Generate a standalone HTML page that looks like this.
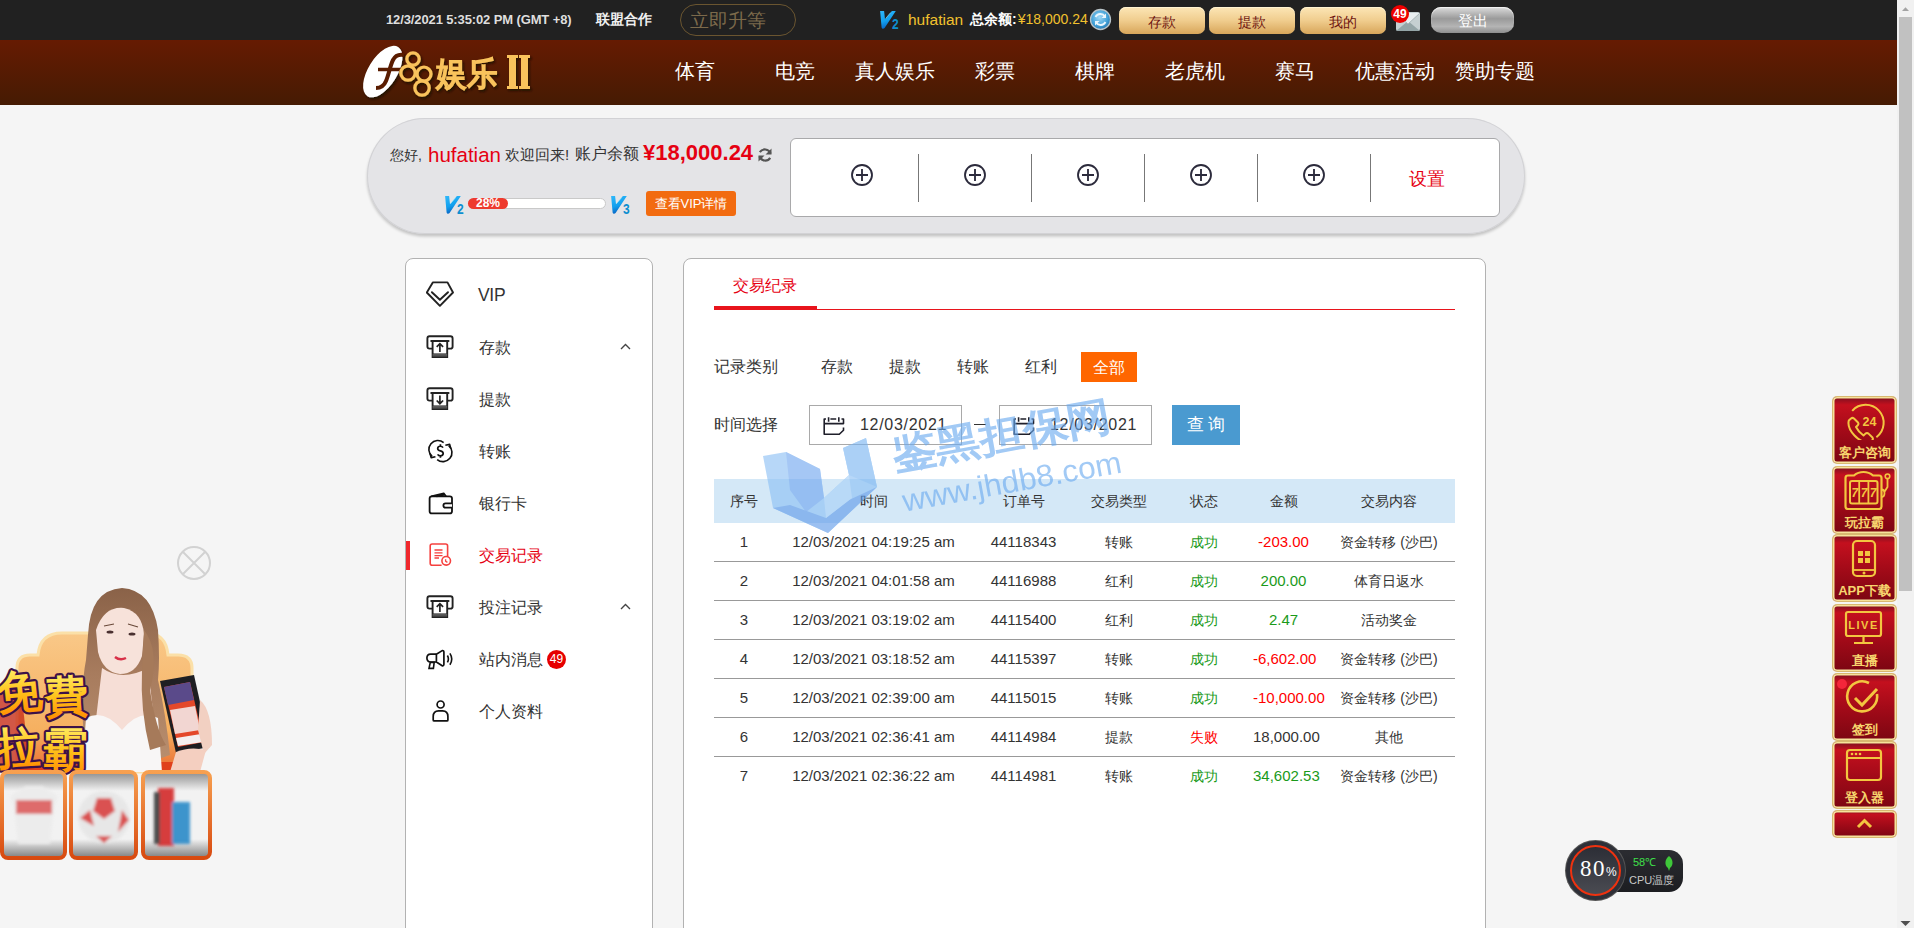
<!DOCTYPE html>
<html><head><meta charset="utf-8">
<style>
*{margin:0;padding:0;box-sizing:border-box}
html,body{width:1914px;height:928px;overflow:hidden}
body{background:#f5f5f5;font-family:"Liberation Sans",sans-serif;color:#333;position:relative}
.a{position:absolute;white-space:nowrap}
#top{position:absolute;left:0;top:0;width:1897px;height:40px;background:#212121}
#nav{position:absolute;left:0;top:40px;width:1897px;height:65px;background:linear-gradient(#661b02,#451b03)}
.nv{position:absolute;top:18px;width:100px;text-align:center;color:#fff;font-size:20px;line-height:26px}
.gbtn{position:absolute;top:7px;width:86px;height:27px;border-radius:7px;background:linear-gradient(#fce6b6,#f0cd8e 50%,#d8a65a);color:#6e1410;font-size:14px;line-height:30px;text-align:center;box-shadow:inset 0 1px 0 #fff3d0}
#sb{position:absolute;left:1897px;top:0;width:17px;height:928px;background:#f1f1f1}
#thumb{position:absolute;left:2px;top:17px;width:13px;height:574px;background:#c1c1c1}
</style></head><body>
<div id="top">
  <div class="a" style="left:386px;top:11px;font-size:13px;font-weight:bold;color:#dedede;line-height:17px;letter-spacing:-0.12px">12/3/2021 5:35:02 PM (GMT +8)</div>
  <div class="a" style="left:596px;top:11px;font-size:14px;font-weight:bold;color:#f0f0f0;line-height:17px">联盟合作</div>
  <div class="a" style="left:680px;top:4px;width:116px;height:32px;border:1px solid #6a5530;border-radius:16px;color:#7c6a4b;font-size:19px;line-height:31px;padding-left:9px">立即升等</div>
  <svg class="a" style="left:879px;top:10px" width="22" height="20" viewBox="0 0 22 20"><defs><linearGradient id="vg" x1="0" y1="0" x2=".3" y2="1"><stop offset="0" stop-color="#30b8fa"/><stop offset=".6" stop-color="#12a0ee"/><stop offset="1" stop-color="#0864c4"/></linearGradient></defs><path d="M1.1 1H5.1L6 9.2L12.9 1H16.8L5.6 18Q5 18.8 4 18.8Q2.9 18.8 2.6 17.6Z" fill="url(#vg)"/><path d="M6.6 8.6L11.6 2.6" stroke="#9ff0ff" stroke-width=".8" opacity=".7"/><text x="0" y="0" font-size="15" font-weight="bold" fill="#0e8fd0" font-family="Liberation Sans" transform="translate(13 18.9) scale(.8 1)">2</text></svg>
  <div class="a" style="left:908px;top:10px;font-size:15.5px;color:#f2c12e;line-height:19px">hufatian</div>
  <div class="a" style="left:970px;top:10px;font-size:14px;font-weight:bold;color:#fff;line-height:19px">总余额:<span style="color:#f2c12e;font-weight:normal;font-size:14px;margin-left:1px">¥18,000.24</span></div>
  <svg class="a" style="left:1089px;top:8px" width="23" height="23" viewBox="0 0 23 23"><defs><radialGradient id="rg" cx=".45" cy=".4" r=".6"><stop offset="0" stop-color="#9fd8f6"/><stop offset=".7" stop-color="#3f9fd6"/><stop offset="1" stop-color="#2a78b0"/></radialGradient></defs><circle cx="11.5" cy="11.5" r="10" fill="url(#rg)" stroke="#b9c4c9" stroke-width="1.3"/><path d="M16 8.5A5.5 5.5 0 0 0 6.5 9M7 14.5A5.5 5.5 0 0 0 16.5 14" fill="none" stroke="#eaf6fd" stroke-width="1.8"/><path d="M17 5.5v4.5h-4.5zM6 17.5v-4.5h4.5z" fill="#eaf6fd"/></svg>
  <div class="gbtn" style="left:1119px">存款</div>
  <div class="gbtn" style="left:1209px">提款</div>
  <div class="gbtn" style="left:1300px">我的</div>
  <svg class="a" style="left:1396px;top:12px" width="24" height="19" viewBox="0 0 24 19"><rect x="0" y="0" width="24" height="19" rx="2" fill="#c5d0d2"/><path d="M0 19L12 9 24 19z" fill="#94a5a7"/><path d="M0 1L12 12 24 1" fill="#e9eff1" stroke="#aab6b8" stroke-width="1"/></svg>
  <div class="a" style="left:1391px;top:5px;width:18px;height:18px;border-radius:50%;background:#e00;color:#fff;font-size:12px;font-weight:bold;line-height:18px;text-align:center">49</div>
  <div class="a" style="left:1431px;top:7px;width:83px;height:26px;border-radius:10px;background:linear-gradient(#dcdcdc,#9a9a9a 45%,#b4b4b4 75%,#8e8e8e);box-shadow:inset 0 1px 1px #f2f2f2;color:#fff;font-size:15px;line-height:28px;text-align:center">登出</div>
</div>
<div id="nav">
  
<svg class="a" style="left:355px;top:0px" width="190" height="65" viewBox="0 0 190 65">
 <defs><filter id="ds" x="-20%" y="-20%" width="140%" height="140%"><feDropShadow dx="1.5" dy="2" stdDeviation="1" flood-color="#1a0800" flood-opacity="0.8"/></filter></defs>
 <g filter="url(#ds)">
 <ellipse cx="28" cy="32" rx="29" ry="14.5" transform="rotate(-58 27.5 32)" fill="#fff"/>
 <path d="M49 15 C44 14 40 16 38 20 C35 26 34 34 31 41 C29 46 26 48 21 48" stroke="#5a1c04" stroke-width="4" fill="none"/>
 <path d="M23 29.5 L48 29.5" stroke="#5a1c04" stroke-width="3.5"/>
 <circle cx="58" cy="19" r="6.2" fill="none" stroke="#f9c35c" stroke-width="3.2"/>
 <circle cx="53" cy="33" r="7.2" fill="none" stroke="#f9c35c" stroke-width="3.2"/>
 <circle cx="69" cy="34" r="7" fill="none" stroke="#f9c35c" stroke-width="3.2"/>
 <circle cx="67" cy="48" r="7.2" fill="none" stroke="#f9c35c" stroke-width="3.2"/>
 <text x="0" y="0" font-size="31" fill="#f9c35c" stroke="#f9c35c" stroke-width="1.6" font-family="Liberation Sans,sans-serif" transform="translate(81,45) scale(1,1.08)">娱乐</text>
 <path d="M152 15h11v3h-2v28h2v3h-11v-3h2v-28h-2z M164 15h11v3h-2v28h2v3h-11v-3h2v-28h-2z" fill="#f9c35c"/>
 </g>
</svg>
  <div class="nv" style="left:645px">体育</div>
  <div class="nv" style="left:745px">电竞</div>
  <div class="nv" style="left:845px">真人娱乐</div>
  <div class="nv" style="left:945px">彩票</div>
  <div class="nv" style="left:1045px">棋牌</div>
  <div class="nv" style="left:1145px">老虎机</div>
  <div class="nv" style="left:1245px">赛马</div>
  <div class="nv" style="left:1345px">优惠活动</div>
  <div class="nv" style="left:1445px">赞助专题</div>
</div>

<div class="a" style="left:367px;top:118px;width:1158px;height:116px;border-radius:58px;background:#e4e4e7;box-shadow:0 2.5px 3px rgba(0,0,0,.2), inset 0 0 0 1px #d2d2d5"></div>
<div class="a" style="left:390px;top:145px;font-size:14px;line-height:20px;color:#333">您好,</div>
<div class="a" style="left:428px;top:143px;font-size:20.5px;line-height:24px;color:#e60012">hufatian</div>
<div class="a" style="left:505px;top:145px;font-size:15px;line-height:20px;color:#333">欢迎回来!</div><div class="a" style="left:575px;top:144px;font-size:16px;line-height:20px;color:#333">账户余额</div>
<div class="a" style="left:643px;top:141px;font-size:22px;line-height:24px;color:#e60012;font-weight:bold">¥18,000.24</div>
<svg class="a" style="left:757px;top:147px" width="16" height="16" viewBox="0 0 16 16"><path d="M13.5 6.5A6 6 0 0 0 2.8 5.2M2.5 9.5a6 6 0 0 0 10.7 1.3" fill="none" stroke="#555" stroke-width="2.2"/><path d="M14.5 1.5v6h-6z M1.5 14.5v-6h6z" fill="#555"/></svg>
<svg class="a" style="left:444px;top:195px" width="22" height="20" viewBox="0 0 22 20"><defs><linearGradient id="vg2" x1="0" y1="0" x2=".3" y2="1"><stop offset="0" stop-color="#30b8fa"/><stop offset=".6" stop-color="#12a0ee"/><stop offset="1" stop-color="#0864c4"/></linearGradient></defs><path d="M1.1 1H5.1L6 9.2L12.9 1H16.8L5.6 18Q5 18.8 4 18.8Q2.9 18.8 2.6 17.6Z" fill="url(#vg2)"/><path d="M6.6 8.6L11.6 2.6" stroke="#9ff0ff" stroke-width=".8" opacity=".7"/><text x="0" y="0" font-size="15" font-weight="bold" fill="#0e8fd0" font-family="Liberation Sans" transform="translate(13 18.9) scale(.8 1)">2</text></svg>
<div class="a" style="left:468px;top:198px;width:138px;height:11px;border-radius:6px;background:#fff;border:1px solid #c9c9c9"></div>
<div class="a" style="left:468px;top:198px;width:40px;height:11px;border-radius:6px;background:#ee3a2e;color:#fff;font-size:12px;font-weight:bold;line-height:11px;text-align:center">28%</div>
<svg class="a" style="left:610px;top:195px" width="22" height="20" viewBox="0 0 22 20"><defs><linearGradient id="vg3" x1="0" y1="0" x2=".3" y2="1"><stop offset="0" stop-color="#30b8fa"/><stop offset=".6" stop-color="#12a0ee"/><stop offset="1" stop-color="#0864c4"/></linearGradient></defs><path d="M1.1 1H5.1L6 9.2L12.9 1H16.8L5.6 18Q5 18.8 4 18.8Q2.9 18.8 2.6 17.6Z" fill="url(#vg3)"/><path d="M6.6 8.6L11.6 2.6" stroke="#9ff0ff" stroke-width=".8" opacity=".7"/><text x="0" y="0" font-size="15" font-weight="bold" fill="#0e8fd0" font-family="Liberation Sans" transform="translate(13 18.9) scale(.8 1)">3</text></svg>
<div class="a" style="left:646px;top:191px;width:90px;height:25px;border-radius:3px;background:#f26b10;color:#fff;font-size:13px;line-height:25px;text-align:center">查看VIP详情</div>
<div class="a" style="left:790px;top:138px;width:710px;height:79px;border-radius:6px;background:#fff;border:1px solid #a9a9ab"></div>
<svg class="a" style="left:850px;top:163px" width="24" height="24" viewBox="0 0 24 24"><circle cx="12" cy="12" r="10" fill="none" stroke="#2c2b3c" stroke-width="1.85"/><path d="M12 6v12M6 12h12" stroke="#2c2b3c" stroke-width="1.85"/></svg>
<svg class="a" style="left:963px;top:163px" width="24" height="24" viewBox="0 0 24 24"><circle cx="12" cy="12" r="10" fill="none" stroke="#2c2b3c" stroke-width="1.85"/><path d="M12 6v12M6 12h12" stroke="#2c2b3c" stroke-width="1.85"/></svg>
<svg class="a" style="left:1076px;top:163px" width="24" height="24" viewBox="0 0 24 24"><circle cx="12" cy="12" r="10" fill="none" stroke="#2c2b3c" stroke-width="1.85"/><path d="M12 6v12M6 12h12" stroke="#2c2b3c" stroke-width="1.85"/></svg>
<svg class="a" style="left:1189px;top:163px" width="24" height="24" viewBox="0 0 24 24"><circle cx="12" cy="12" r="10" fill="none" stroke="#2c2b3c" stroke-width="1.85"/><path d="M12 6v12M6 12h12" stroke="#2c2b3c" stroke-width="1.85"/></svg>
<svg class="a" style="left:1302px;top:163px" width="24" height="24" viewBox="0 0 24 24"><circle cx="12" cy="12" r="10" fill="none" stroke="#2c2b3c" stroke-width="1.85"/><path d="M12 6v12M6 12h12" stroke="#2c2b3c" stroke-width="1.85"/></svg>
<div class="a" style="left:918px;top:154px;width:1px;height:48px;background:#777"></div>
<div class="a" style="left:1031px;top:154px;width:1px;height:48px;background:#777"></div>
<div class="a" style="left:1144px;top:154px;width:1px;height:48px;background:#777"></div>
<div class="a" style="left:1257px;top:154px;width:1px;height:48px;background:#777"></div>
<div class="a" style="left:1370px;top:154px;width:1px;height:48px;background:#777"></div>
<div class="a" style="left:1409px;top:168px;font-size:18px;line-height:22px;color:#e60012">设置</div>

<div class="a" style="left:405px;top:258px;width:248px;height:700px;border-radius:8px;background:#fff;border:1px solid #b2b2b2"></div>
<div class="a" style="left:683px;top:258px;width:803px;height:700px;border-radius:8px;background:#fff;border:1px solid #b2b2b2"></div>
<svg class="a" style="left:426px;top:281px" width="28" height="26" viewBox="0 0 28 26"><path d="M6.8 1.4H21.5L27 11.5L13.9 24.8L0.8 11.5Z" fill="none" stroke="#222" stroke-width="1.9" stroke-linejoin="round"/><path d="M5.9 11.2L13.9 18.8L22 11.2" fill="none" stroke="#222" stroke-width="1.9" stroke-linecap="round" stroke-linejoin="round"/></svg>
<div class="a" style="left:478px;top:284px;font-size:17.5px;line-height:22px;color:#333;letter-spacing:-0.3px">VIP</div>
<svg class="a" style="left:426px;top:334px" width="28" height="26" viewBox="0 0 28 26"><path d="M6.4 14.6H3.6Q1.4 14.6 1.4 12.4V4.4Q1.4 2.2 3.6 2.2H24.4Q26.6 2.2 26.6 4.4V12.4Q26.6 14.6 24.4 14.6H21.4" fill="none" stroke="#222" stroke-width="1.9"/><path d="M5.2 7H22.6" stroke="#222" stroke-width="1.9" stroke-linecap="round"/><path d="M6.6 7V23H21.2V7" fill="none" stroke="#222" stroke-width="1.9"/><rect x="6.6" y="19.4" width="14.6" height="3.6" fill="#333"/><path d="M6.6 20.6H21.2M6.6 21.8H21.2" stroke="#888" stroke-width=".5"/><path d="M13.9 17.9V9.6M10.7 12.8L13.9 9.6L17.1 12.8" fill="none" stroke="#222" stroke-width="1.7"/></svg>
<div class="a" style="left:479px;top:337px;font-size:16px;line-height:22px;color:#333">存款</div>
<svg class="a" style="left:620px;top:343px" width="11" height="7" viewBox="0 0 11 7"><path d="M1 6l4.5-4.5L10 6" fill="none" stroke="#444" stroke-width="1.4"/></svg>
<svg class="a" style="left:426px;top:386px" width="28" height="26" viewBox="0 0 28 26"><path d="M6.4 14.6H3.6Q1.4 14.6 1.4 12.4V4.4Q1.4 2.2 3.6 2.2H24.4Q26.6 2.2 26.6 4.4V12.4Q26.6 14.6 24.4 14.6H21.4" fill="none" stroke="#222" stroke-width="1.9"/><path d="M5.2 7H22.6" stroke="#222" stroke-width="1.9" stroke-linecap="round"/><path d="M6.6 7V23H21.2V7" fill="none" stroke="#222" stroke-width="1.9"/><rect x="6.6" y="19.4" width="14.6" height="3.6" fill="#333"/><path d="M6.6 20.6H21.2M6.6 21.8H21.2" stroke="#888" stroke-width=".5"/><path d="M13.9 9.4V17.7M10.7 14.5L13.9 17.7L17.1 14.5" fill="none" stroke="#222" stroke-width="1.7"/></svg>
<div class="a" style="left:479px;top:389px;font-size:16px;line-height:22px;color:#333">提款</div>
<svg class="a" style="left:426px;top:438px" width="28" height="26" viewBox="0 0 28 26"><g transform="translate(1.44 1.3) scale(0.9)"><path d="M18 3.6A10 10 0 0 0 5.2 19M10.8 22.5A10 10 0 0 0 23.6 7" fill="none" stroke="#111" stroke-width="1.8"/><path d="M2.8 15.6L4.1 20.4L8.9 19.3M26 10.4L24.7 5.6L19.9 6.7" fill="none" stroke="#111" stroke-width="1.8" stroke-linejoin="round"/><path d="M17.3 9.3Q16.4 7.7 14.4 7.7Q11.4 7.7 11.4 10.2Q11.4 12.3 14.4 12.9Q17.5 13.5 17.5 15.8Q17.5 18.3 14.4 18.3Q12.3 18.3 11.3 16.7M14.4 5.6V7.7M14.4 18.3V20.4" fill="none" stroke="#111" stroke-width="1.9"/></g></svg>
<div class="a" style="left:479px;top:441px;font-size:16px;line-height:22px;color:#333">转账</div>
<svg class="a" style="left:426px;top:490px" width="28" height="26" viewBox="0 0 28 26"><rect x="3.6" y="6.4" width="22.4" height="17" rx="2.2" fill="none" stroke="#111" stroke-width="1.8"/><path d="M26 13.3H19.6Q17.4 13.3 17.4 15.5Q17.4 17.7 19.6 17.7H26" fill="#fff" stroke="#111" stroke-width="1.8"/><path d="M5.2 6.4L17.8 3.2L20.2 6.4M10.5 6.4L19.2 4.6" fill="none" stroke="#111" stroke-width="1.6" stroke-linejoin="round"/></svg>
<div class="a" style="left:479px;top:493px;font-size:16px;line-height:22px;color:#333">银行卡</div>
<svg class="a" style="left:426px;top:542px" width="28" height="26" viewBox="0 0 28 26"><path d="M21.6 14V4Q21.6 2 19.6 2H6.2Q4.2 2 4.2 4V21.2Q4.2 23.2 6.2 23.2H15.6" fill="none" stroke="#f5413f" stroke-width="1.6"/><path d="M8.5 8H16.5M8.5 10.8H16.5M8.5 13.6H16.5M8.5 16H13" stroke="#f5413f" stroke-width="1.3"/><circle cx="20.2" cy="18.8" r="4.3" fill="#fff" stroke="#f5413f" stroke-width="1.6"/><path d="M19.6 17.2V19.2L21.4 20.4" fill="none" stroke="#f5413f" stroke-width="1.3"/></svg>
<div class="a" style="left:479px;top:545px;font-size:16px;line-height:22px;color:#e60012">交易记录</div>
<svg class="a" style="left:426px;top:594px" width="28" height="26" viewBox="0 0 28 26"><path d="M6.4 14.6H3.6Q1.4 14.6 1.4 12.4V4.4Q1.4 2.2 3.6 2.2H24.4Q26.6 2.2 26.6 4.4V12.4Q26.6 14.6 24.4 14.6H21.4" fill="none" stroke="#222" stroke-width="1.9"/><path d="M5.2 7H22.6" stroke="#222" stroke-width="1.9" stroke-linecap="round"/><path d="M6.6 7V23H21.2V7" fill="none" stroke="#222" stroke-width="1.9"/><rect x="6.6" y="19.4" width="14.6" height="3.6" fill="#333"/><path d="M6.6 20.6H21.2M6.6 21.8H21.2" stroke="#888" stroke-width=".5"/><path d="M13.9 17.9V9.6M10.7 12.8L13.9 9.6L17.1 12.8" fill="none" stroke="#222" stroke-width="1.7"/></svg>
<div class="a" style="left:479px;top:597px;font-size:16px;line-height:22px;color:#333">投注记录</div>
<svg class="a" style="left:620px;top:603px" width="11" height="7" viewBox="0 0 11 7"><path d="M1 6l4.5-4.5L10 6" fill="none" stroke="#444" stroke-width="1.4"/></svg>
<svg class="a" style="left:426px;top:646px" width="28" height="26" viewBox="0 0 28 26"><path d="M10.4 8.2H4.6Q1 8.2 0.9 12.1Q1 16 4.6 16H10.4" fill="none" stroke="#111" stroke-width="1.7"/><path d="M10.4 8.2L16.2 4.6Q17.9 4.4 17.9 6.2V18.2Q17.9 20 16.2 19.8L10.4 16Z" fill="none" stroke="#111" stroke-width="1.7" stroke-linejoin="round"/><path d="M4.3 16.4L8.2 16.4L7.4 22.4L3 22.4Z" fill="none" stroke="#111" stroke-width="1.6"/><path d="M21.4 9.5Q23.4 13 21.4 16.4M23.9 7.4Q27.6 13 23.9 18.8" fill="none" stroke="#111" stroke-width="1.6"/></svg>
<div class="a" style="left:479px;top:649px;font-size:16px;line-height:22px;color:#333">站内消息</div>
<svg class="a" style="left:426px;top:698px" width="28" height="26" viewBox="0 0 28 26"><circle cx="14.6" cy="6.5" r="3.5" fill="none" stroke="#111" stroke-width="1.7"/><path d="M8.2 22.9Q7.2 22.9 7.2 21.9V18.6Q7.2 12.9 12.6 12.9H16.6Q21.9 12.9 21.9 18.6V21.9Q21.9 22.9 20.9 22.9Z" fill="none" stroke="#111" stroke-width="1.7" stroke-linejoin="round"/></svg>
<div class="a" style="left:479px;top:701px;font-size:16px;line-height:22px;color:#333">个人资料</div>
<div class="a" style="left:406px;top:541px;width:4px;height:29px;background:#f0282d"></div>
<div class="a" style="left:547px;top:650px;width:19px;height:19px;border-radius:50%;background:#e60000;color:#fff;font-size:12px;line-height:19px;text-align:center">49</div>

<div class="a" style="left:733px;top:275px;font-size:16px;line-height:22px;color:#e60012">交易纪录</div>
<div class="a" style="left:714px;top:309px;width:741px;height:1px;background:#e8141c"></div>
<div class="a" style="left:714px;top:306px;width:103px;height:4px;background:#e8141c"></div>
<div class="a" style="left:714px;top:356px;font-size:16px;line-height:22px;color:#333">记录类别</div>
<div class="a" style="left:809px;top:352px;width:56px;height:30px;font-size:16px;line-height:30px;text-align:center;color:#333">存款</div>
<div class="a" style="left:877px;top:352px;width:56px;height:30px;font-size:16px;line-height:30px;text-align:center;color:#333">提款</div>
<div class="a" style="left:945px;top:352px;width:56px;height:30px;font-size:16px;line-height:30px;text-align:center;color:#333">转账</div>
<div class="a" style="left:1013px;top:352px;width:56px;height:30px;font-size:16px;line-height:30px;text-align:center;color:#333">红利</div>
<div class="a" style="left:1081px;top:352px;width:56px;height:30px;background:#ff6600;font-size:16px;line-height:32px;text-align:center;color:#fff">全部</div>
<div class="a" style="left:714px;top:414px;font-size:16px;line-height:22px;color:#333">时间选择</div>
<div class="a" style="left:809px;top:405px;width:153px;height:40px;border:1px solid #a9a9a9;background:transparent"></div>
<svg class="a" style="left:823px;top:416px" width="23" height="20" viewBox="0 0 23 20"><path d="M3 3H1.2V18.3H16.3L20.5 14.2V11.5M1.2 7.6H20.5V3H18.5M7.4 3H13.2M5.6 1.3V5.7M15.8 1.3V5.7" fill="none" stroke="#1f1f2a" stroke-width="1.6" stroke-linejoin="round"/></svg>
<div class="a" style="left:860px;top:414px;font-size:16px;line-height:22px;color:#333;letter-spacing:0.7px">12/03/2021</div>
<div class="a" style="left:999px;top:405px;width:153px;height:40px;border:1px solid #a9a9a9;background:transparent"></div>
<svg class="a" style="left:1013px;top:416px" width="23" height="20" viewBox="0 0 23 20"><path d="M3 3H1.2V18.3H16.3L20.5 14.2V11.5M1.2 7.6H20.5V3H18.5M7.4 3H13.2M5.6 1.3V5.7M15.8 1.3V5.7" fill="none" stroke="#1f1f2a" stroke-width="1.6" stroke-linejoin="round"/></svg>
<div class="a" style="left:1050px;top:414px;font-size:16px;line-height:22px;color:#333;letter-spacing:0.7px">12/03/2021</div>
<div class="a" style="left:974px;top:424px;width:12px;height:1px;background:#333"></div>
<div class="a" style="left:1172px;top:405px;width:68px;height:40px;background:#4a9ad0;color:#fff;font-size:17px;line-height:40px;text-align:center;letter-spacing:4px;text-indent:4px">查询</div>
<div class="a" style="left:714px;top:479px;width:741px;height:44px;background:#d4e8f7"></div>
<div class="a" style="left:714px;top:490px;width:60px;font-size:14px;line-height:22px;text-align:center;color:#333">序号</div>
<div class="a" style="left:774px;top:490px;width:199px;font-size:14px;line-height:22px;text-align:center;color:#333">时间</div>
<div class="a" style="left:973px;top:490px;width:101px;font-size:14px;line-height:22px;text-align:center;color:#333">订单号</div>
<div class="a" style="left:1074px;top:490px;width:89px;font-size:14px;line-height:22px;text-align:center;color:#333">交易类型</div>
<div class="a" style="left:1163px;top:490px;width:81px;font-size:14px;line-height:22px;text-align:center;color:#333">状态</div>
<div class="a" style="left:1244px;top:490px;width:79px;font-size:14px;line-height:22px;text-align:center;color:#333">金额</div>
<div class="a" style="left:1323px;top:490px;width:132px;font-size:14px;line-height:22px;text-align:center;color:#333">交易内容</div>
<div class="a" style="left:714px;top:561px;width:741px;height:1px;background:#999"></div>
<div class="a" style="left:714px;top:531px;width:60px;font-size:15px;line-height:22px;text-align:center;color:#333">1</div>
<div class="a" style="left:774px;top:531px;width:199px;font-size:15px;line-height:22px;text-align:center;color:#333">12/03/2021 04:19:25 am</div>
<div class="a" style="left:973px;top:531px;width:101px;font-size:15px;line-height:22px;text-align:center;color:#333">44118343</div>
<div class="a" style="left:1074px;top:531px;width:89px;font-size:14px;line-height:22px;text-align:center;color:#333">转账</div>
<div class="a" style="left:1163px;top:531px;width:81px;font-size:14px;line-height:22px;text-align:center;color:#1a9a1a">成功</div>
<div class="a" style="left:1253px;top:531px;width:61px;font-size:15px;line-height:22px;text-align:center;color:#f00">-203.00</div>
<div class="a" style="left:1323px;top:531px;width:132px;font-size:14px;line-height:22px;text-align:center;color:#333">资金转移 (沙巴)</div>
<div class="a" style="left:714px;top:600px;width:741px;height:1px;background:#999"></div>
<div class="a" style="left:714px;top:570px;width:60px;font-size:15px;line-height:22px;text-align:center;color:#333">2</div>
<div class="a" style="left:774px;top:570px;width:199px;font-size:15px;line-height:22px;text-align:center;color:#333">12/03/2021 04:01:58 am</div>
<div class="a" style="left:973px;top:570px;width:101px;font-size:15px;line-height:22px;text-align:center;color:#333">44116988</div>
<div class="a" style="left:1074px;top:570px;width:89px;font-size:14px;line-height:22px;text-align:center;color:#333">红利</div>
<div class="a" style="left:1163px;top:570px;width:81px;font-size:14px;line-height:22px;text-align:center;color:#1a9a1a">成功</div>
<div class="a" style="left:1253px;top:570px;width:61px;font-size:15px;line-height:22px;text-align:center;color:#1a9a1a">200.00</div>
<div class="a" style="left:1323px;top:570px;width:132px;font-size:14px;line-height:22px;text-align:center;color:#333">体育日返水</div>
<div class="a" style="left:714px;top:639px;width:741px;height:1px;background:#999"></div>
<div class="a" style="left:714px;top:609px;width:60px;font-size:15px;line-height:22px;text-align:center;color:#333">3</div>
<div class="a" style="left:774px;top:609px;width:199px;font-size:15px;line-height:22px;text-align:center;color:#333">12/03/2021 03:19:02 am</div>
<div class="a" style="left:973px;top:609px;width:101px;font-size:15px;line-height:22px;text-align:center;color:#333">44115400</div>
<div class="a" style="left:1074px;top:609px;width:89px;font-size:14px;line-height:22px;text-align:center;color:#333">红利</div>
<div class="a" style="left:1163px;top:609px;width:81px;font-size:14px;line-height:22px;text-align:center;color:#1a9a1a">成功</div>
<div class="a" style="left:1253px;top:609px;width:61px;font-size:15px;line-height:22px;text-align:center;color:#1a9a1a">2.47</div>
<div class="a" style="left:1323px;top:609px;width:132px;font-size:14px;line-height:22px;text-align:center;color:#333">活动奖金</div>
<div class="a" style="left:714px;top:678px;width:741px;height:1px;background:#999"></div>
<div class="a" style="left:714px;top:648px;width:60px;font-size:15px;line-height:22px;text-align:center;color:#333">4</div>
<div class="a" style="left:774px;top:648px;width:199px;font-size:15px;line-height:22px;text-align:center;color:#333">12/03/2021 03:18:52 am</div>
<div class="a" style="left:973px;top:648px;width:101px;font-size:15px;line-height:22px;text-align:center;color:#333">44115397</div>
<div class="a" style="left:1074px;top:648px;width:89px;font-size:14px;line-height:22px;text-align:center;color:#333">转账</div>
<div class="a" style="left:1163px;top:648px;width:81px;font-size:14px;line-height:22px;text-align:center;color:#1a9a1a">成功</div>
<div class="a" style="left:1253px;top:648px;width:61px;font-size:15px;line-height:22px;text-align:center;color:#f00">-6,602.00</div>
<div class="a" style="left:1323px;top:648px;width:132px;font-size:14px;line-height:22px;text-align:center;color:#333">资金转移 (沙巴)</div>
<div class="a" style="left:714px;top:717px;width:741px;height:1px;background:#999"></div>
<div class="a" style="left:714px;top:687px;width:60px;font-size:15px;line-height:22px;text-align:center;color:#333">5</div>
<div class="a" style="left:774px;top:687px;width:199px;font-size:15px;line-height:22px;text-align:center;color:#333">12/03/2021 02:39:00 am</div>
<div class="a" style="left:973px;top:687px;width:101px;font-size:15px;line-height:22px;text-align:center;color:#333">44115015</div>
<div class="a" style="left:1074px;top:687px;width:89px;font-size:14px;line-height:22px;text-align:center;color:#333">转账</div>
<div class="a" style="left:1163px;top:687px;width:81px;font-size:14px;line-height:22px;text-align:center;color:#1a9a1a">成功</div>
<div class="a" style="left:1253px;top:687px;width:61px;font-size:15px;line-height:22px;text-align:center;color:#f00">-10,000.00</div>
<div class="a" style="left:1323px;top:687px;width:132px;font-size:14px;line-height:22px;text-align:center;color:#333">资金转移 (沙巴)</div>
<div class="a" style="left:714px;top:756px;width:741px;height:1px;background:#999"></div>
<div class="a" style="left:714px;top:726px;width:60px;font-size:15px;line-height:22px;text-align:center;color:#333">6</div>
<div class="a" style="left:774px;top:726px;width:199px;font-size:15px;line-height:22px;text-align:center;color:#333">12/03/2021 02:36:41 am</div>
<div class="a" style="left:973px;top:726px;width:101px;font-size:15px;line-height:22px;text-align:center;color:#333">44114984</div>
<div class="a" style="left:1074px;top:726px;width:89px;font-size:14px;line-height:22px;text-align:center;color:#333">提款</div>
<div class="a" style="left:1163px;top:726px;width:81px;font-size:14px;line-height:22px;text-align:center;color:#f00">失败</div>
<div class="a" style="left:1253px;top:726px;width:61px;font-size:15px;line-height:22px;text-align:center;color:#333">18,000.00</div>
<div class="a" style="left:1323px;top:726px;width:132px;font-size:14px;line-height:22px;text-align:center;color:#333">其他</div>
<div class="a" style="left:714px;top:765px;width:60px;font-size:15px;line-height:22px;text-align:center;color:#333">7</div>
<div class="a" style="left:774px;top:765px;width:199px;font-size:15px;line-height:22px;text-align:center;color:#333">12/03/2021 02:36:22 am</div>
<div class="a" style="left:973px;top:765px;width:101px;font-size:15px;line-height:22px;text-align:center;color:#333">44114981</div>
<div class="a" style="left:1074px;top:765px;width:89px;font-size:14px;line-height:22px;text-align:center;color:#333">转账</div>
<div class="a" style="left:1163px;top:765px;width:81px;font-size:14px;line-height:22px;text-align:center;color:#1a9a1a">成功</div>
<div class="a" style="left:1253px;top:765px;width:61px;font-size:15px;line-height:22px;text-align:center;color:#1a9a1a">34,602.53</div>
<div class="a" style="left:1323px;top:765px;width:132px;font-size:14px;line-height:22px;text-align:center;color:#333">资金转移 (沙巴)</div>

<svg class="a" style="left:740px;top:380px" width="420" height="180" viewBox="740 380 420 180">
 <g opacity=".62">
  <path d="M763 456 L786 452 L820 469 L824 498 L849 475 L843 448 L866 438 L877 487 L828 533 L773 508z" fill="#8cc0f5"/>
  <path d="M786 452 L820 469 L824 498 L806 512 L790 490z" fill="#6fa5ef"/>
  <path d="M843 448 L866 438 L877 487 L849 475z" fill="#78b4f2"/>
  <path d="M773 508 L828 533 L877 487 L849 500 L826 518 L790 505z" fill="#5f9ae9"/>
  <path d="M824 498 L849 475 L852 498 L826 518z" fill="#a8d0f8"/>
  <g transform="rotate(-10.3 900 470)" fill="#6aaaf0" font-family="Liberation Sans,sans-serif">
   <text x="895" y="468" font-size="41" textLength="222" lengthAdjust="spacingAndGlyphs" stroke="#6aaaf0" stroke-width="1.5">鉴黑担保网</text>
   <text x="897" y="512" font-size="31" textLength="222" lengthAdjust="spacingAndGlyphs">www.jhdb8.com</text>
  </g>
 </g>
</svg>

<svg class="a" style="left:0px;top:540px" width="240" height="330" viewBox="0 0 240 330">
 <defs>
  <linearGradient id="org" x1="0" y1="0" x2="0" y2="1"><stop offset="0" stop-color="#f9c888"/><stop offset=".7" stop-color="#f6b060"/><stop offset="1" stop-color="#e86a30"/></linearGradient>
  <linearGradient id="box" x1="0" y1="0" x2="0" y2="1"><stop offset="0" stop-color="#8c8c8c"/><stop offset=".22" stop-color="#f2f2f2"/><stop offset=".78" stop-color="#f2f2f2"/><stop offset="1" stop-color="#7c7c7c"/></linearGradient>
  <linearGradient id="hair" x1="0" y1="0" x2="0" y2="1"><stop offset="0" stop-color="#8a6248"/><stop offset=".5" stop-color="#a87c5e"/><stop offset="1" stop-color="#b88e6e"/></linearGradient>
  <linearGradient id="txt" x1="0" y1="0" x2="0" y2="1"><stop offset="0" stop-color="#fff06a"/><stop offset=".5" stop-color="#ffc21a"/><stop offset="1" stop-color="#ff8a00"/></linearGradient>
  <linearGradient id="brd" x1="0" y1="0" x2="0" y2="1"><stop offset="0" stop-color="#f7a050"/><stop offset="1" stop-color="#d84a10"/></linearGradient>
 </defs>
 <circle cx="194" cy="23" r="16" fill="none" stroke="#d2d2d2" stroke-width="2"/>
 <path d="M183 12l22 22M205 12l-22 22" stroke="#d2d2d2" stroke-width="2"/>
 <path d="M17 232 L17 128 Q17 115 30 115 L38 115 Q40 93 62 93 L146 93 Q166 93 168 115 L178 115 Q192 115 192 128 L192 232z" fill="url(#org)" stroke="#fbe0a8" stroke-width="3"/>
 <path d="M0 150 L20 140 L30 230 L0 232z" fill="#c8301a" opacity=".8"/>
 <path d="M20 222 L190 222 L192 232 L17 232z" fill="#e0401c"/>
 <path d="M88 95 Q90 50 122 48 Q152 50 158 90 Q160 120 158 140 Q166 175 170 215 L150 222 L146 150 L104 150 L98 200 L84 200 Q80 150 86 120z" fill="url(#hair)"/>
 <path d="M96 90 Q104 66 124 68 Q142 72 144 94 L142 116 Q136 134 120 134 Q103 132 98 112z" fill="#f7e2da"/>
 <path d="M102 128 Q122 142 148 128 L156 196 L94 196z" fill="#f6ded6"/>
 <path d="M86 178 Q104 168 122 190 Q140 168 158 178 L162 232 L82 232z" fill="#f8f6f6"/>
 <path d="M104 86 L114 84 M128 84 L138 87" stroke="#6a4a3a" stroke-width="1.2"/>
 <ellipse cx="110" cy="92" rx="3.5" ry="1.6" fill="#4a3030"/><ellipse cx="132" cy="94" rx="3.5" ry="1.6" fill="#4a3030"/>
 <path d="M115 117 Q120 121 126 118" stroke="#d83048" stroke-width="2.5" fill="none"/>
 <path d="M144 90 Q160 110 150 150 Q156 190 166 205 L150 210 Q140 170 142 130z" fill="#a67a5a"/>
 <path d="M160 141 L194 135 L210 207 L176 213z" fill="#1e1e22"/>
 <path d="M164 147 L190 142 L204 202 L178 207z" fill="#e4482a"/>
 <path d="M164 147 L190 142 L194 160 L168 165z" fill="#5a4a8a"/>
 <path d="M170 170 L195 166 L200 190 L175 194z" fill="#f4f0f0" opacity=".85"/>
 <path d="M176 198 L201 194 L203 202 L178 206z" fill="#f4f0f0"/>
 <path d="M200 160 Q212 170 212 205 L204 214 L198 190z" fill="#f2d0c2"/>
 <path d="M176 212 Q190 206 206 210 L200 232 L170 232z" fill="#f4cfc0"/>
 <g font-family="Liberation Sans,sans-serif" font-weight="bold" fill="url(#txt)" stroke="#3c1248" stroke-width="4.5" paint-order="stroke" stroke-linejoin="round">
  <text x="-4" y="168" font-size="46" transform="rotate(-6 20 150)">免</text><text x="44" y="172" font-size="44" transform="rotate(-3 66 150)">費</text>
  <text x="-4" y="222" font-size="44" transform="rotate(-4 20 205)">拉</text><text x="42" y="226" font-size="46">霸</text>
 </g>
 <g stroke="url(#brd)" stroke-width="4" fill="url(#box)">
  <rect x="2" y="232" width="63" height="86" rx="6"/><rect x="71" y="232" width="65" height="86" rx="6"/><rect x="143" y="232" width="67" height="86" rx="6"/>
 </g>
 <filter id="blr"><feGaussianBlur stdDeviation="1.6"/></filter>
 <g opacity=".9" filter="url(#blr)">
 <path d="M10 256 L26 246 L42 246 L58 256 L54 270 L50 304 L18 304 L14 270z" fill="#ececec"/><rect x="16" y="260" width="36" height="14" fill="#d83a3a" opacity=".8"/>
 <circle cx="104" cy="277" r="26" fill="#e6e6e6"/><path d="M97 258 L111 258 L115 271 L104 279 L93 271z M80 278 L90 270 L94 286z M122 270 L129 280 L118 292z M96 296 L112 296 L104 303z" fill="#d84040"/>
 <rect x="158" y="248" width="16" height="58" fill="#d42a2a"/><rect x="172" y="262" width="18" height="42" fill="#2a8ac8"/><rect x="154" y="252" width="6" height="52" fill="#3a3a3a"/>
 </g>
</svg>
<div id="sb"><div id="thumb"></div></div>
<style>.rb{position:absolute;left:1833px;width:63px;border-radius:4px;background:linear-gradient(#7a1020,#c4101e 12%,#a00a18 55%,#7c0612);box-shadow:inset 0 0 0 1.5px #f6e29a, 0 0 0 1px #d8b870;color:#f7d56e;font-size:13px;text-align:center}</style>
<div class="rb" style="top:397px;height:66px"><svg style="position:absolute;left:9px;top:3px" width="44" height="40" viewBox="0 0 44 40"><path d="M10.2 10.8A18 18 0 1 1 34.4 37.2" fill="none" stroke="#f3c640" stroke-width="2"/><text x="20.5" y="26" font-size="12.5" font-weight="bold" fill="#f3c640" font-family="Liberation Sans">24</text><path d="M12 18.5L16 22.5Q17 24 15.8 25.2L14 27Q16.5 32 21.5 35.5L23.5 33.6Q25 32.5 26.5 33.6L30.5 37.5Q31.5 39 30 40.5L28 42Q20 43.5 12.5 35.5Q5 27.5 6.8 20.5L9 18.5Q10.5 17.3 12 18.5Z" fill="none" stroke="#f3c640" stroke-width="2" stroke-linejoin="round"/></svg><div style="position:absolute;left:0;width:63px;top:48px;line-height:16px;font-size:13px;font-weight:bold">客户咨询</div></div>
<div class="rb" style="top:467px;height:66px"><svg style="position:absolute;left:9px;top:3px" width="50" height="40" viewBox="0 0 50 40"><path d="M3.5 8Q3.5 5.5 6 5.5H12Q16 2 21.5 2Q27 2 31 5.5H37Q39.5 5.5 39.5 8V36.5Q39.5 39 37 39H6Q3.5 39 3.5 36.5Z" fill="none" stroke="#f3c640" stroke-width="2.2"/><rect x="8" y="11" width="27.5" height="22.5" rx="2" fill="none" stroke="#f3c640" stroke-width="2"/><path d="M17.2 11V33.5M26.4 11V33.5" stroke="#f3c640" stroke-width="1.8"/><g font-size="12" font-weight="bold" fill="#f3c640" font-family="Liberation Sans" font-style="italic" text-anchor="middle"><text x="12.8" y="27">7</text><text x="22" y="27">7</text><text x="31.2" y="27">7</text></g><path d="M39.5 19.5Q42.5 19.5 42.5 23Q42.5 27 39.5 27M42 22.5L45.5 17V8.6" fill="none" stroke="#f3c640" stroke-width="1.8"/><circle cx="45.5" cy="6.3" r="2.3" fill="none" stroke="#f3c640" stroke-width="1.6"/></svg><div style="position:absolute;left:0;width:63px;top:48px;line-height:16px;font-size:13px;font-weight:bold">玩拉霸</div></div>
<div class="rb" style="top:535px;height:66px"><svg style="position:absolute;left:9px;top:4px" width="44" height="40" viewBox="0 0 44 40"><rect x="11" y="2" width="22" height="35" rx="4" fill="none" stroke="#f3c640" stroke-width="2.2"/><rect x="16" y="12" width="5" height="5" fill="#f3c640"/><rect x="23" y="12" width="5" height="5" fill="#f3c640"/><rect x="16" y="19" width="5" height="5" fill="#f3c640"/><rect x="23" y="19" width="5" height="5" fill="#f3c640"/><path d="M12 31h20" stroke="#f3c640" stroke-width="1.8"/><circle cx="22" cy="34" r="1.5" fill="#f3c640"/></svg><div style="position:absolute;left:0;width:63px;top:48px;line-height:16px;font-size:13px;font-weight:bold">APP下载</div></div>
<div class="rb" style="top:605px;height:66px"><svg style="position:absolute;left:9px;top:3px" width="44" height="40" viewBox="0 0 44 40"><rect x="4" y="4" width="35" height="24" rx="2" fill="none" stroke="#f3c640" stroke-width="2.2"/><text x="21.5" y="21" text-anchor="middle" font-size="11" font-weight="bold" fill="#f3c640" font-family="Liberation Sans" letter-spacing="1.5">LIVE</text><path d="M21.5 28v6M12 35h19" stroke="#f3c640" stroke-width="2.2"/></svg><div style="position:absolute;left:0;width:63px;top:48px;line-height:16px;font-size:13px;font-weight:bold">直播</div></div>
<div class="rb" style="top:674px;height:66px"><svg style="position:absolute;left:9px;top:4px" width="44" height="40" viewBox="0 0 44 40"><path d="M35 16A15 15 0 1 1 27 5" fill="none" stroke="#f3c640" stroke-width="2.6"/><path d="M13 20l7 7 15-16" fill="none" stroke="#f3c640" stroke-width="3"/></svg><div style="position:absolute;left:0;width:63px;top:48px;line-height:16px;font-size:13px;font-weight:bold">签到</div></div>
<div class="rb" style="top:742px;height:66px"><svg style="position:absolute;left:9px;top:4px" width="44" height="40" viewBox="0 0 44 40"><rect x="5" y="4" width="34" height="30" rx="3" fill="none" stroke="#f3c640" stroke-width="2.2"/><path d="M5 12h34" stroke="#f3c640" stroke-width="2"/><circle cx="10" cy="8" r="1.3" fill="#f3c640"/><circle cx="14" cy="8" r="1.3" fill="#f3c640"/><circle cx="18" cy="8" r="1.3" fill="#f3c640"/></svg><div style="position:absolute;left:0;width:63px;top:48px;line-height:16px;font-size:13px;font-weight:bold">登入器</div></div>
<div class="a" style="left:1837px;top:679px;width:10px;height:10px;border-radius:50%;background:#f3263a"></div>
<div class="rb" style="top:811px;height:26px"><svg style="position:absolute;left:23px;top:7px" width="17" height="11" viewBox="0 0 17 11"><path d="M2 9l6.5-6.5L15 9" fill="none" stroke="#f3c640" stroke-width="3"/></svg></div>
<div class="a" style="left:1585px;top:850px;width:98px;height:42px;border-radius:14px;background:linear-gradient(#2b2c31,#1c1d21)"></div>
<div class="a" style="left:1566px;top:841px;width:59px;height:59px;border-radius:50%;background:#2e3038;box-shadow:0 0 0 1px #555"></div>
<div class="a" style="left:1570px;top:845px;width:51px;height:51px;border-radius:50%;border:2.5px solid #f0320f;background:linear-gradient(#2c2e36,#4a4b52)"></div>
<div class="a" style="left:1580px;top:856px;font-family:'Liberation Serif',serif;font-size:23px;line-height:26px;color:#fff;letter-spacing:1.5px">80<span style="font-family:'Liberation Sans';font-size:12px">%</span></div>
<div class="a" style="left:1633px;top:855px;font-size:11px;line-height:14px;color:#3fe04a">58℃</div>
<svg class="a" style="left:1664px;top:856px" width="10" height="15" viewBox="0 0 10 15"><path d="M5 0C9 3 10 9 6 12L5 15 4 12C0 9 1 3 5 0z" fill="#3fc83a"/></svg>
<div class="a" style="left:1629px;top:873px;font-size:11px;line-height:14px;color:#c9c9c9">CPU温度</div>
<svg class="a" style="left:1899px;top:4px" width="13" height="8" viewBox="0 0 13 8"><path d="M3 7L6.5 3.2 10 7z" fill="#a3a3a3"/></svg>
<svg class="a" style="left:1899px;top:920px" width="13" height="8" viewBox="0 0 13 8"><path d="M1.5 1L6.5 6 11.5 1z" fill="#505050"/></svg>
</body></html>
